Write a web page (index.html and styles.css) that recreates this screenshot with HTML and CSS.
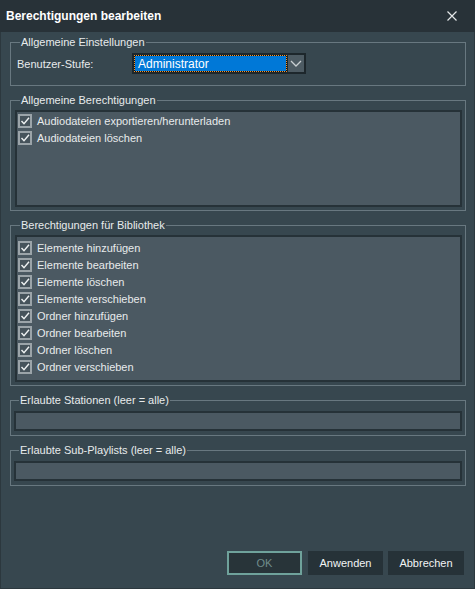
FILE: index.html
```html
<!DOCTYPE html>
<html>
	<head>
		<meta charset="UTF-8">
		<title>Berechtigungen bearbeiten</title>
		<link rel="stylesheet" href="styles.css">
	</head>
	<body>
		<div class="window">
			<div class="titlebar">
				<span class="title">Berechtigungen bearbeiten</span>
				<span class="close">
					<svg width="10" height="10" viewBox="0 0 10 10"><path d="M0.5 0.5L9.5 9.5M9.5 0.5L0.5 9.5" stroke="#e4e7e9" stroke-width="1.2" fill="none"/></svg>
				</span>
			</div>
			<div class="content">
				<fieldset class="group group-settings">
					<legend>Allgemeine Einstellungen</legend>
					<div class="field-row">
						<label class="field-label">Benutzer-Stufe:</label>
						<div class="combo">
							<span class="combo-value">Administrator</span>
							<span class="combo-arrow">
								<svg width="12" height="7" viewBox="0 0 12 7"><path d="M1 1L6 6L11 1" stroke="#c9cfd2" stroke-width="1.3" fill="none"/></svg>
							</span>
						</div>
					</div>
				</fieldset>

				<fieldset class="group">
					<legend>Allgemeine Berechtigungen</legend>
					<div class="list list-general">
						<div class="check-row"><span class="box"><svg width="14" height="14" viewBox="0 0 14 14"><rect x="1" y="1" width="12" height="12" fill="none" stroke="#9ba4a9" stroke-width="2"/><path d="M3.5 7L6 9.8L11 3.8" stroke="#eef1f2" stroke-width="1.4" fill="none"/></svg></span>Audiodateien exportieren/herunterladen</div>
						<div class="check-row"><span class="box"><svg width="14" height="14" viewBox="0 0 14 14"><rect x="1" y="1" width="12" height="12" fill="none" stroke="#9ba4a9" stroke-width="2"/><path d="M3.5 7L6 9.8L11 3.8" stroke="#eef1f2" stroke-width="1.4" fill="none"/></svg></span>Audiodateien löschen</div>
					</div>
				</fieldset>

				<fieldset class="group">
					<legend>Berechtigungen für Bibliothek</legend>
					<div class="list list-library">
						<div class="check-row"><span class="box"><svg width="14" height="14" viewBox="0 0 14 14"><rect x="1" y="1" width="12" height="12" fill="none" stroke="#9ba4a9" stroke-width="2"/><path d="M3.5 7L6 9.8L11 3.8" stroke="#eef1f2" stroke-width="1.4" fill="none"/></svg></span>Elemente hinzufügen</div>
						<div class="check-row"><span class="box"><svg width="14" height="14" viewBox="0 0 14 14"><rect x="1" y="1" width="12" height="12" fill="none" stroke="#9ba4a9" stroke-width="2"/><path d="M3.5 7L6 9.8L11 3.8" stroke="#eef1f2" stroke-width="1.4" fill="none"/></svg></span>Elemente bearbeiten</div>
						<div class="check-row"><span class="box"><svg width="14" height="14" viewBox="0 0 14 14"><rect x="1" y="1" width="12" height="12" fill="none" stroke="#9ba4a9" stroke-width="2"/><path d="M3.5 7L6 9.8L11 3.8" stroke="#eef1f2" stroke-width="1.4" fill="none"/></svg></span>Elemente löschen</div>
						<div class="check-row"><span class="box"><svg width="14" height="14" viewBox="0 0 14 14"><rect x="1" y="1" width="12" height="12" fill="none" stroke="#9ba4a9" stroke-width="2"/><path d="M3.5 7L6 9.8L11 3.8" stroke="#eef1f2" stroke-width="1.4" fill="none"/></svg></span>Elemente verschieben</div>
						<div class="check-row"><span class="box"><svg width="14" height="14" viewBox="0 0 14 14"><rect x="1" y="1" width="12" height="12" fill="none" stroke="#9ba4a9" stroke-width="2"/><path d="M3.5 7L6 9.8L11 3.8" stroke="#eef1f2" stroke-width="1.4" fill="none"/></svg></span>Ordner hinzufügen</div>
						<div class="check-row"><span class="box"><svg width="14" height="14" viewBox="0 0 14 14"><rect x="1" y="1" width="12" height="12" fill="none" stroke="#9ba4a9" stroke-width="2"/><path d="M3.5 7L6 9.8L11 3.8" stroke="#eef1f2" stroke-width="1.4" fill="none"/></svg></span>Ordner bearbeiten</div>
						<div class="check-row"><span class="box"><svg width="14" height="14" viewBox="0 0 14 14"><rect x="1" y="1" width="12" height="12" fill="none" stroke="#9ba4a9" stroke-width="2"/><path d="M3.5 7L6 9.8L11 3.8" stroke="#eef1f2" stroke-width="1.4" fill="none"/></svg></span>Ordner löschen</div>
						<div class="check-row"><span class="box"><svg width="14" height="14" viewBox="0 0 14 14"><rect x="1" y="1" width="12" height="12" fill="none" stroke="#9ba4a9" stroke-width="2"/><path d="M3.5 7L6 9.8L11 3.8" stroke="#eef1f2" stroke-width="1.4" fill="none"/></svg></span>Ordner verschieben</div>
					</div>
				</fieldset>

				<fieldset class="group group-input">
					<legend>Erlaubte Stationen (leer = alle)</legend>
					<div class="text-input"></div>
				</fieldset>

				<fieldset class="group group-input">
					<legend>Erlaubte Sub-Playlists (leer = alle)</legend>
					<div class="text-input"></div>
				</fieldset>
			</div>
			<div class="buttons">
				<span class="btn btn-ok">OK</span>
				<span class="btn">Anwenden</span>
				<span class="btn btn-wide">Abbrechen</span>
			</div>
		</div>
	</body>
</html>
```

FILE: styles.css
```css
*{
	margin: 0;
	padding: 0;
	box-sizing: border-box;
}
body{
	width: 475px;
	height: 589px;
	background: #37474f;
	font-family: "Liberation Sans", Arial, sans-serif;
	font-size: 11px;
	color: #e8ebec;
	overflow: hidden;
}
.window{
	width: 475px;
	height: 589px;
	display: flex;
	flex-direction: column;
	background: #37474f;
	border-left: 1px solid #2c383e;
	border-right: 1px solid #2c383e;
	border-bottom: 1px solid #2c383e;
}
.titlebar{
	height: 32px;
	margin: 0 -1px;
	background: #283238;
	display: flex;
	align-items: center;
	justify-content: space-between;
	padding: 0 18px 0 6px;
	flex-shrink: 0;
}
.title{
	font-size: 12px;
	font-weight: bold;
	color: #ffffff;
}
.close{
	width: 10px;
	height: 10px;
	display: flex;
}
.content{
	flex: 1;
	display: flex;
	flex-direction: column;
	gap: 7px;
	padding: 3px 8px 0 9px;
}
.group{
	border: 1px solid #687880;
	padding: 3px 3px 3px 4px;
	min-width: 0;
}
.group legend{
	margin-left: 5px;
	padding: 0 1px;
	line-height: 14px;
	color: #e8ebec;
}
.group-settings{
	padding: 4px 3px 11px 4px;
}
.field-row{
	display: flex;
	align-items: center;
}
.field-label{
	width: 117px;
	padding-left: 2px;
}
.combo{
	width: 174px;
	height: 21px;
	display: flex;
	border: 1px solid #1d272c;
	padding: 1px;
	background: #1d272c;
	gap: 1px;
}
.combo-value{
	flex: 1;
	display: flex;
	align-items: center;
	padding-left: 3px;
	font-size: 12px;
	color: #ffffff;
	border: 1px dotted #f2952f;
	background: linear-gradient(#0078d7, #0078d7) padding-box, #111111;
}
.combo-arrow{
	width: 16px;
	background: #4d5b63;
	display: flex;
	align-items: center;
	justify-content: center;
}
.list{
	background: #4b5962;
	border: 2px solid #263238;
	padding: 0 0 0 1px;
}
.list-general{
	height: 97px;
}
.list-library{
	height: 147px;
	padding-top: 2px;
}
.check-row{
	height: 17px;
	display: flex;
	align-items: center;
	gap: 5px;
	white-space: nowrap;
}
.box{
	width: 14px;
	height: 14px;
	display: flex;
	background: #46535b;
}
.group-input{
	padding: 4px 3px 4px 3px;
}
.text-input{
	height: 20px;
	background: #4b5962;
	border: 2px solid #263238;
}
.buttons{
	display: flex;
	justify-content: flex-end;
	padding: 0 10px 13px 0;
	gap: 5px;
}
.btn{
	width: 75px;
	height: 24px;
	display: flex;
	align-items: center;
	justify-content: center;
	background: #263238;
	color: #f2f4f5;
	font-size: 11px;
}
.btn-ok{
	margin-right: 1px;
	background: #283439;
	border: 2px solid #6fa29b;
	color: #6f8c8b;
}
.btn-wide{
	width: 76px;
}
```
